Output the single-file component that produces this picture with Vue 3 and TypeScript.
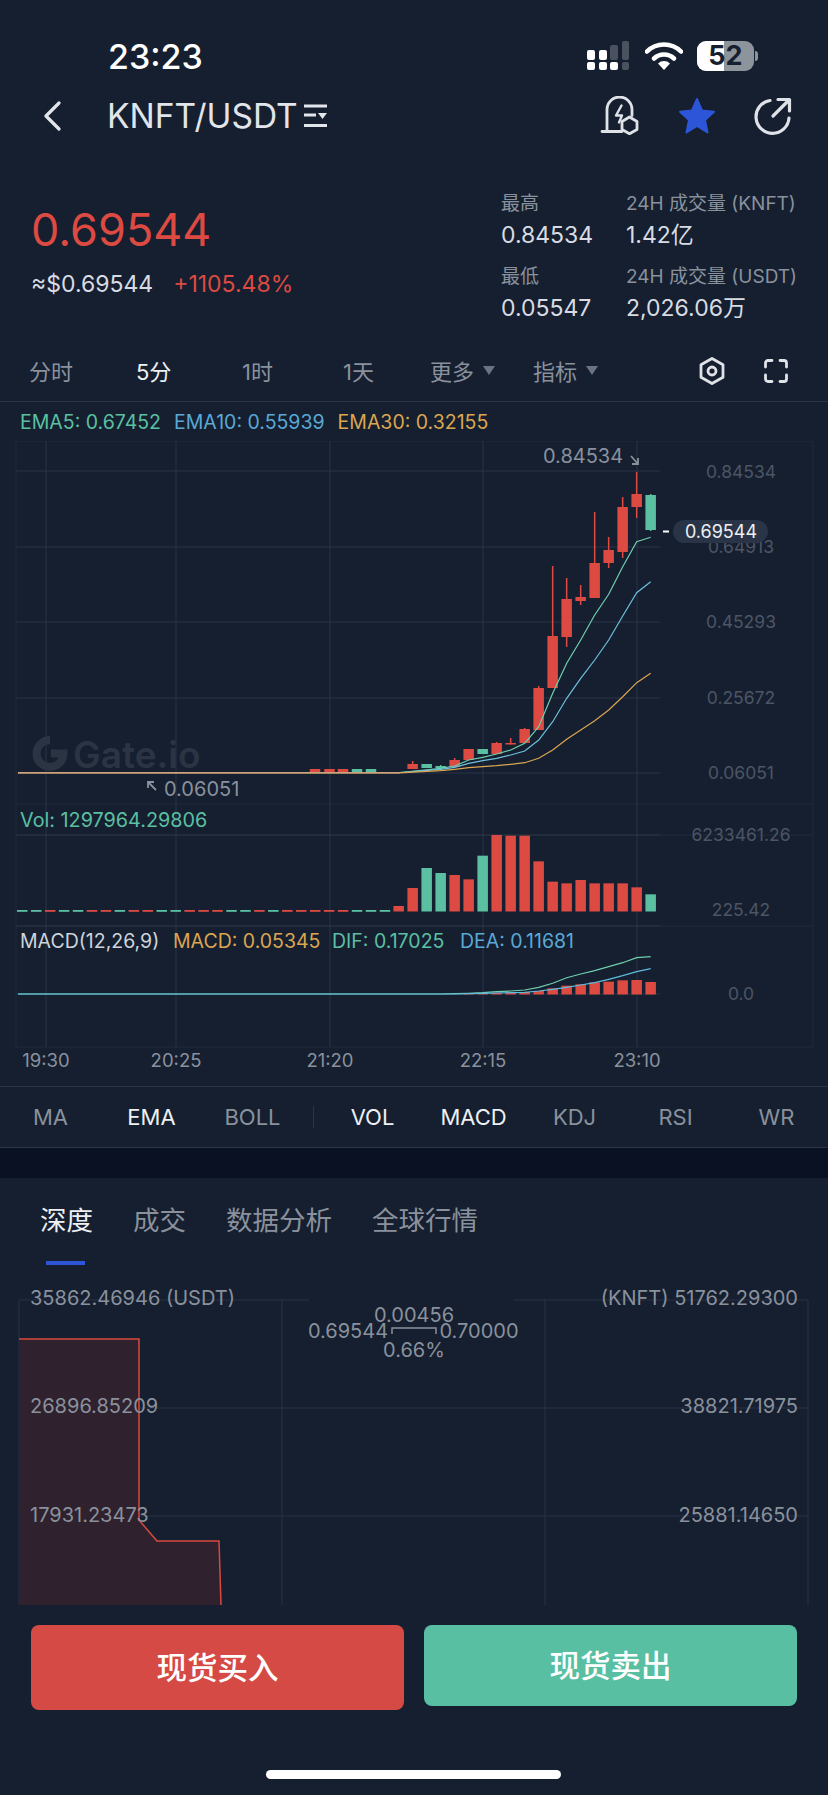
<template>
  <div class="page">
    <header class="status">
      <span class="clock">23:23</span>
      <div class="status-icons">
        <svg class="signal" width="44" height="30" viewBox="0 0 44 30">
          <g fill="#fff">
            <rect x="0" y="9" width="8" height="10" rx="2" />
            <rect x="12" y="9" width="8" height="10" rx="2" />
            <rect x="23" y="21" width="8" height="8" rx="2" />
            <rect x="0" y="21" width="8" height="8" rx="2" />
            <rect x="12" y="21" width="8" height="8" rx="2" />
          </g>
          <g fill="#4a5260">
            <rect x="23" y="4" width="8" height="15" rx="2" />
            <rect x="35" y="0" width="7" height="19" rx="2" />
            <rect x="35" y="21" width="7" height="8" rx="2" />
          </g>
        </svg>
        <svg class="wifi" width="38" height="28" viewBox="0 0 38 28">
          <path d="M2 9.500a24 24 0 0 1 34 0" fill="none" stroke="#fff" stroke-width="4.600" stroke-linecap="round" />
          <path d="M9 16.500a14.500 14.500 0 0 1 20 0" fill="none" stroke="#fff" stroke-width="4.600" stroke-linecap="round" />
          <path d="M13 21.500a8.500 8.500 0 0 1 12 0L19 28z" fill="#fff" />
        </svg>
        <div class="battery">
          <div class="battery-body"><span class="battery-level"></span><b>52</b></div>
          <i class="battery-nub"></i>
        </div>
      </div>
    </header>

    <nav class="nav">
      <svg class="back" width="20" height="30" viewBox="0 0 20 30">
        <path d="M17 2 4 15l13 13" fill="none" stroke="#e2e5ea" stroke-width="3.200" stroke-linecap="round" stroke-linejoin="round" />
      </svg>
      <h1 class="pair">KNFT/USDT</h1>
      <svg class="pair-switch" width="24" height="24" viewBox="0 0 24 24">
        <path d="M0 2h23M0 11h12M0 21.500h23" stroke="#e2e5ea" stroke-width="3" fill="none" />
        <path d="M14 9h9l-4.500 6z" fill="#e2e5ea" />
      </svg>
      <div class="nav-actions">
        <svg width="40" height="40" viewBox="0 1.500 40 40">
          <g fill="none" stroke="#dfe2e7" stroke-width="2.800" stroke-linecap="round" stroke-linejoin="round">
            <path d="M2 37h20M7 37V15a12.500 12.500 0 0 1 25 0v6" />
            <path d="M21.500 11 16 21h6l-3 7" stroke-width="2.400" />
            <path d="M29.500 22.500 37 27v8l-7.500 4.200L22 35v-8z" />
          </g>
        </svg>
        <svg width="40" height="40" viewBox="0 0 40 40">
          <path d="M20 3l5 11.500 12 1.300-9 8.200 2.500 12.500L20 30l-10.500 6.500L12 24l-9-8.200 12-1.300z" fill="#2c55d8" stroke="#2c55d8" stroke-width="2" stroke-linejoin="round" />
        </svg>
        <svg width="38" height="38" viewBox="0 0 38 38">
          <g fill="none" stroke="#dfe2e7" stroke-width="3.200" stroke-linecap="round" stroke-linejoin="round">
            <path d="M16 3.500A16.500 16.500 0 1 0 35 21" />
            <path d="M19 19 35 3M24 2.500h11.500V14" />
          </g>
        </svg>
      </div>
    </nav>

    <section class="summary">
      <div class="price-block">
        <div class="price">0.69544</div>
        <div class="price-sub">
          <span class="fiat">≈$0.69544</span>
          <span class="change">+1105.48%</span>
        </div>
      </div>
      <div class="stats">
        <div v-for="stat in stats" :key="stat.label" class="stat">
          <span class="stat-label">{{ stat.label }}</span>
          <span class="stat-value">{{ stat.value }}</span>
        </div>
      </div>
    </section>

    <div class="periods">
      <span class="period w1">分时</span>
      <span class="period w2 active">5分</span>
      <span class="period w3">1时</span>
      <span class="period w4">1天</span>
      <span class="period w5">更多<i class="caret"></i></span>
      <span class="period w6">指标<i class="caret"></i></span>
      <div class="period-icons">
        <svg width="28" height="30" viewBox="0 0 28 30">
          <path d="M14 2.500 25 8.800v12.400L14 27.500 3 21.200V8.800z" fill="none" stroke="#dfe2e7" stroke-width="2.800" stroke-linejoin="round" />
          <circle cx="14" cy="15" r="4" fill="none" stroke="#dfe2e7" stroke-width="2.800" />
        </svg>
        <svg width="24" height="24" viewBox="0 0 24 24">
          <path d="M1.500 8V4a2.500 2.500 0 0 1 2.500-2.500h4M16 1.500h4A2.500 2.500 0 0 1 22.500 4v4M22.500 16v4a2.500 2.500 0 0 1-2.500 2.500h-4M8 22.500H4A2.500 2.500 0 0 1 1.500 20v-4" fill="none" stroke="#dfe2e7" stroke-width="2.800" stroke-linecap="round" />
        </svg>
      </div>
    </div>

    <div class="legend">
      <span class="c-green">EMA5: 0.67452</span>
      <span class="c-blue">EMA10: 0.55939</span>
      <span class="c-orange">EMA30: 0.32155</span>
    </div>

    <svg class="chart" width="828" height="645" viewBox="0 441 828 645">
      <g stroke="#2a3546" stroke-width="1" fill="none">
        <path v-for="y in frameLines" :key="y" :d="`M16 ${y}H813`" stroke="#212b3b" />
        <path v-for="y in gridLines" :key="y" :d="`M16 ${y}H660`" />
        <path v-for="x in vLines" :key="x" :d="`M${x} 441V1047`" />
        <path d="M16 441V1047M813 441V1047" stroke="#212b3b" />
      </g>

      <g class="watermark">
        <path d="M50 740a13.500 13.500 0 1 0 13.500 13.500H51" fill="none" stroke="#2a3443" stroke-width="8" />
        <text x="73" y="768">Gate.io</text>
      </g>

      <g v-for="c in candles" :key="c.x" :fill="c.color">
        <rect :x="c.x - 0.75" :y="c.wickTop" width="1.500" :height="c.wickBottom - c.wickTop" />
        <rect :x="c.x - 5.25" :y="c.top" width="10.500" :height="c.bottom - c.top" />
      </g>
      <polyline :points="emaFast" class="line" stroke="#6fcfae" />
      <polyline :points="emaMid" class="line" stroke="#6cc0dc" />
      <polyline :points="emaSlow" class="line" stroke="#dba64f" />
      <path d="M18 772.800H400" stroke="#c9a37f" stroke-width="1.500" fill="none" />

      <text x="543" y="463" class="mark">0.84534</text>
      <path d="M631 456l7 8M638 458v6h-6" class="arrow" />
      <text x="164" y="796" class="mark">0.06051</text>
      <path d="M156 790l-8-8M148 788v-6h6" class="arrow" />

      <text v-for="label in axisLabels" :key="label.text" x="741" :y="label.y + 6.5" text-anchor="middle" class="axis">{{ label.text }}</text>
      <rect x="673" y="520" width="95" height="23" rx="11.500" fill="#2a3447" />
      <path d="M663 531.500h6" stroke="#fff" stroke-width="2" />
      <text x="721" y="538" text-anchor="middle" class="last">0.69544</text>

      <text x="20" y="827" class="legend-text vol" fill="#5bc0a2">Vol: 1297964.29806</text>
      <rect v-for="d in dashes" :key="d.x" :x="d.x" y="910" width="10.500" height="1.800" :fill="d.color" />
      <rect v-for="b in volBars" :key="b.x" :x="b.x - 5.25" :y="b.top" width="10.500" :height="911.5 - b.top" :fill="b.color" />

      <text y="948" class="legend-text">
        <tspan x="20" fill="#cfd3da">MACD(12,26,9)</tspan>
        <tspan x="173" fill="#dba64f">MACD: 0.05345</tspan>
        <tspan x="332" fill="#5bc0a2">DIF: 0.17025</tspan>
        <tspan x="460" fill="#5aa9d6">DEA: 0.11681</tspan>
      </text>
      <rect v-for="b in macdBars" :key="b.x" :x="b.x - 5.25" :y="b.top" width="10.500" :height="994.5 - b.top" fill="#dc4a42" />
      <polyline :points="macdDif" class="line" stroke="#6fcfae" />
      <polyline :points="macdDea" class="line" stroke="#5fbcdc" />

      <text v-for="t in timeLabels" :key="t.text" :x="t.x" y="1067" text-anchor="middle" class="time">{{ t.text }}</text>
    </svg>

    <div class="indicators">
      <template v-for="item in indicators" :key="item.name">
        <span class="indicator" :class="{ active: item.active }">{{ item.name }}</span>
        <i v-if="item.name === 'BOLL'" class="indicator-divider"></i>
      </template>
    </div>

    <div class="band"></div>

    <section class="depth">
      <div class="tabs">
        <span class="tab active">深度</span>
        <span class="tab">成交</span>
        <span class="tab">数据分析</span>
        <span class="tab">全球行情</span>
      </div>

      <svg class="depth-chart" width="828" height="345" viewBox="0 1280 828 345">
        <g stroke="#283344" fill="none">
          <path d="M19 1300H309M513 1300H808M19 1408H808M19 1516H808" />
          <path d="M19 1300V1605M282 1300V1605M545 1300V1605M808 1300V1605" />
        </g>
        <path d="M19 1339H139V1520L157 1541H219L221 1605H19Z" fill="#2f222e" />
        <path d="M19 1339H139V1520L157 1541H219L221 1605" fill="none" stroke="#d9493f" stroke-width="1.500" />

        <text x="30" y="1305" class="depth-label">35862.46946 (USDT)</text>
        <text x="30" y="1413" class="depth-label">26896.85209</text>
        <text x="30" y="1522" class="depth-label">17931.23473</text>
        <text x="798" y="1305" text-anchor="end" class="depth-label">(KNFT) 51762.29300</text>
        <text x="798" y="1413" text-anchor="end" class="depth-label">38821.71975</text>
        <text x="798" y="1522" text-anchor="end" class="depth-label">25881.14650</text>

        <text x="414" y="1322" text-anchor="middle" class="depth-label">0.00456</text>
        <text x="348" y="1338" text-anchor="middle" class="depth-label">0.69544</text>
        <text x="479" y="1338" text-anchor="middle" class="depth-label">0.70000</text>
        <text x="414" y="1357" text-anchor="middle" class="depth-label">0.66%</text>
        <path d="M392 1334v-6h44v6" fill="none" stroke="#8a919c" stroke-width="1.500" />
      </svg>

      <div class="actions">
        <button class="trade buy">现货买入</button>
        <button class="trade sell">现货卖出</button>
      </div>
      <div class="home-bar"></div>
    </section>
  </div>
</template>

<script setup lang="ts">
const red = '#dc4a42'
const green = '#5bc0a2'

const stats = [
  { label: '最高', value: '0.84534' },
  { label: '24H 成交量 (KNFT)', value: '1.42亿' },
  { label: '最低', value: '0.05547' },
  { label: '24H 成交量 (USDT)', value: '2,026.06万' },
]

const frameLines = [441, 804, 835, 926, 1047]
const gridLines = [471, 547, 622, 698, 773, 835, 926, 994]
const vLines = [46, 176, 330, 483, 637]

const axisLabels = [
  { text: '0.84534', y: 471 },
  { text: '0.64913', y: 546 },
  { text: '0.45293', y: 621 },
  { text: '0.25672', y: 697 },
  { text: '0.06051', y: 772 },
  { text: '6233461.26', y: 834 },
  { text: '225.42', y: 909 },
  { text: '0.0', y: 993 },
]

const timeLabels = [
  { text: '19:30', x: 46 },
  { text: '20:25', x: 176 },
  { text: '21:20', x: 330 },
  { text: '22:15', x: 483 },
  { text: '23:10', x: 637 },
]

const indicators = [
  { name: 'MA', active: false },
  { name: 'EMA', active: true },
  { name: 'BOLL', active: false },
  { name: 'VOL', active: true },
  { name: 'MACD', active: true },
  { name: 'KDJ', active: false },
  { name: 'RSI', active: false },
  { name: 'WR', active: false },
]

// values below were read off the picture, newest candle first, 14px apart
const slotX = (i: number) => 650.67 - 14 * i

const candleRows: [number, number, number, number, string][] = [
  [495, 530, 494, 531, green],
  [494, 507, 472, 518, red],
  [507, 552, 497, 558, red],
  [550, 563, 537, 568, red],
  [563, 598, 512, 598, red],
  [597, 601, 585, 605, red],
  [599, 637, 578, 647, red],
  [636, 688, 566, 688, red],
  [688, 730, 686, 730, red],
  [729, 743, 728, 743, red],
  [743, 744.5, 738, 744.5, red],
  [743, 754, 742, 754, red],
  [749, 754, 749, 754, green],
  [749, 760, 749, 760, red],
  [760, 767, 758, 767, red],
  [766, 768, 765, 769, green],
  [764, 768, 764, 768, green],
  [764, 769, 761, 769, red],
]

const candles = [
  ...candleRows.map((c, i) => ({
    x: slotX(i),
    top: c[0],
    bottom: c[1],
    wickTop: c[2],
    wickBottom: c[3],
    color: c[4],
  })),
  ...[315, 329.5, 343, 357, 371].map((x, i) => ({
    x,
    top: 769,
    bottom: 772,
    wickTop: 769,
    wickBottom: 772,
    color: i < 3 ? red : green,
  })),
]

const toPoints = (rows: number[], base: number, endY: number) => {
  const pts = rows.map((y, i) => `${slotX(i).toFixed(1)},${(y / 3 + base).toFixed(1)}`)
  pts.push(`400,${endY}`, `18,${endY}`)
  return pts.join(' ')
}

const emaFast = toPoints([412, 425, 500, 583, 645, 720, 790, 880, 980, 1030, 1050, 1062, 1072, 1080, 1098, 1105], 400, 772.5)
const emaMid = toPoints([545, 578, 648, 720, 780, 835, 895, 965, 1020, 1053, 1065, 1075, 1082, 1090, 1102, 1108], 400, 772.5)
const emaSlow = toPoints([820, 848, 890, 930, 962, 990, 1018, 1050, 1075, 1088, 1093, 1097, 1100, 1103, 1108, 1112], 400, 772.8)
const macdDif = toPoints([470, 473, 488, 500, 512, 522, 533, 550, 562, 570, 573, 575, 578, 580, 581, 582], 800, 994)
const macdDea = toPoints([506, 515, 527, 538, 548, 555, 562, 568, 573, 577, 578, 579, 580, 581, 582, 582], 800, 994)

const volTops = [283, 262, 250, 250, 250, 240, 250, 245, 184, 107, 107, 105, 167, 238, 225, 219, 204, 264, 318]
const volGreen = [0, 12, 15, 16]
const volBars = volTops.map((t, i) => ({
  x: slotX(i),
  top: 800 + t / 3,
  color: volGreen.includes(i) ? green : red,
}))

const macdTops = [546, 540, 541, 545, 547, 553, 557, 565, 573, 576, 578, 578, 580, 581]
const macdBars = macdTops.map((t, i) => ({ x: slotX(i), top: 800 + t / 3 }))

const dashColors = 'ggrggrrgrrggrrrggrgrrrrrggg'
const dashes = dashColors.split('').map((k, i) => ({
  x: 17 + i * 13.95,
  color: k === 'g' ? green : red,
}))
</script>

<style>
body {
  margin: 0;
  background: #151f30;
}
</style>

<style scoped>
.page {
  width: 828px;
  height: 1795px;
  overflow: hidden;
  background: #151f30;
  color: #8a919c;
  font-family: Inter, "Noto Sans CJK SC", sans-serif;
}

.status {
  height: 84px;
  display: flex;
  justify-content: space-between;
  align-items: flex-start;
  padding: 38px 70px 0 108px;
  box-sizing: border-box;
}
.clock {
  font-size: 34px;
  line-height: 37px;
  font-weight: 500;
  color: #fff;
}
.status-icons {
  display: flex;
  align-items: flex-start;
  gap: 14px;
  margin-top: 3px;
}
.wifi {
  margin-top: 1px;
}
.battery {
  display: flex;
  align-items: center;
}
.battery-body {
  position: relative;
  width: 57px;
  height: 30px;
  border-radius: 9px;
  background: #8e949c;
  text-align: center;
}
.battery-level {
  position: absolute;
  inset: 0 30px 0 0;
  border-radius: 9px 0 0 9px;
  background: #fff;
}
.battery-body b {
  position: relative;
  font-size: 27px;
  line-height: 30px;
  color: #151f30;
}
.battery-nub {
  width: 3px;
  height: 10px;
  margin-left: 1px;
  border-radius: 0 3px 3px 0;
  background: #8e949c;
}

.nav {
  height: 64px;
  display: flex;
  align-items: center;
  padding: 0 36px 0 42px;
}
.back {
  margin-right: 45px;
}
.pair {
  margin: 0;
  font-size: 33.500px;
  font-weight: 400;
  color: #e2e5ea;
}
.pair-switch {
  margin-left: 6px;
}
.nav-actions {
  margin-left: auto;
  display: flex;
  align-items: center;
  gap: 37px;
}

.summary {
  height: 194px;
  display: flex;
  justify-content: space-between;
  padding: 44px 32px 0 31px;
  box-sizing: border-box;
}
.price {
  font-size: 45px;
  line-height: 54px;
  margin-top: 11px;
  color: #dc4a42;
}
.price-sub {
  display: flex;
  gap: 20px;
  margin-top: 13px;
  font-size: 23px;
  line-height: 28px;
}
.fiat {
  color: #d8dce2;
}
.change {
  color: #dc4a42;
}
.stats {
  display: grid;
  grid-template-columns: 125px 168px;
  align-content: start;
  row-gap: 17px;
  margin-right: 2px;
  width: 293px;
}
.stat {
  display: flex;
  flex-direction: column;
  gap: 7px;
  white-space: nowrap;
}
.stat-label {
  font-size: 19px;
  line-height: 24px;
}
.stat-value {
  font-size: 23px;
  line-height: 25px;
  color: #d8dce2;
}

.periods {
  height: 60px;
  display: flex;
  align-items: center;
  padding: 0 0 4px 29px;
  border-bottom: 1px solid #2a3546;
  box-sizing: border-box;
  font-size: 22px;
  white-space: nowrap;
}
.period.active {
  color: #eef0f3;
}
.w1 { width: 107px; }
.w2 { width: 106px; }
.w3 { width: 101px; }
.w4 { width: 87px; }
.w5 { width: 103px; display: flex; align-items: center; }
.w6 { width: 104px; display: flex; align-items: center; }
.caret {
  width: 0;
  height: 0;
  margin: 2px 0 0 9px;
  border-left: 6.500px solid transparent;
  border-right: 6.500px solid transparent;
  border-top: 9px solid #6b7380;
}
.period-icons {
  margin: 3px 0 0 61px;
  display: flex;
  align-items: center;
  gap: 38px;
}

.legend {
  height: 39px;
  display: flex;
  align-items: center;
  gap: 13px;
  padding-left: 20px;
  box-sizing: border-box;
  font-size: 19.500px;
  white-space: nowrap;
}
.c-green { color: #5bc0a2; }
.c-blue { color: #5aa9d6; }
.c-orange { color: #dba64f; }

.chart {
  display: block;
  font-family: Inter, sans-serif;
}
.line {
  fill: none;
  stroke-width: 1.200;
}
.watermark text {
  font-size: 37px;
  font-weight: 600;
  fill: #2a3443;
}
.mark {
  font-size: 20px;
  fill: #8a919c;
}
.arrow {
  fill: none;
  stroke: #8a919c;
  stroke-width: 1.800;
}
.axis {
  font-size: 17.500px;
  fill: #4c5564;
}
.last {
  font-size: 18px;
  fill: #eef0f3;
}
.legend-text {
  font-size: 19.500px;
}
.legend-text.vol {
  font-size: 19.800px;
}
.time {
  font-size: 18.500px;
  fill: #8a919c;
}

.indicators {
  height: 62px;
  display: flex;
  align-items: center;
  border-top: 1px solid #2a3546;
  border-bottom: 1px solid #2a3546;
  box-sizing: border-box;
  font-size: 22px;
}
.indicator {
  width: 101px;
  text-align: center;
}
.indicator.active {
  color: #eef0f3;
}
.indicator-divider {
  width: 1px;
  height: 22px;
  margin: 0 8px 0 10px;
  background: #2a3546;
}

.band {
  height: 30px;
  background: #0a1122;
}

.depth {
  display: flex;
  flex-direction: column;
}
.tabs {
  height: 102px;
  display: flex;
  align-items: flex-start;
  gap: 40px;
  padding: 22px 0 0 40px;
  box-sizing: border-box;
  font-size: 26.500px;
  line-height: 40px;
  white-space: nowrap;
}
.tab {
  position: relative;
}
.tab.active {
  color: #eef0f3;
}
.tab.active::after {
  content: "";
  position: absolute;
  left: 6px;
  bottom: -25px;
  width: 39px;
  height: 4px;
  background: #2c55d8;
}
.depth-chart {
  display: block;
  font-family: Inter, sans-serif;
}
.depth-label {
  font-size: 20px;
  fill: #8a919c;
}

.actions {
  display: flex;
  align-items: flex-start;
  gap: 20px;
  padding: 0 31px;
  height: 145px;
  box-sizing: border-box;
}
.trade {
  flex: 1;
  border: 0;
  border-radius: 8px;
  padding: 0 0 4px;
  color: #fff;
  font-family: inherit;
  font-size: 30.500px;
  font-weight: 500;
}
.buy {
  height: 85px;
  background: #d54a44;
}
.sell {
  height: 81px;
  background: #58bfa2;
}
.home-bar {
  width: 295px;
  height: 9px;
  margin-left: 266px;
  border-radius: 5px;
  background: #fff;
}
</style>
